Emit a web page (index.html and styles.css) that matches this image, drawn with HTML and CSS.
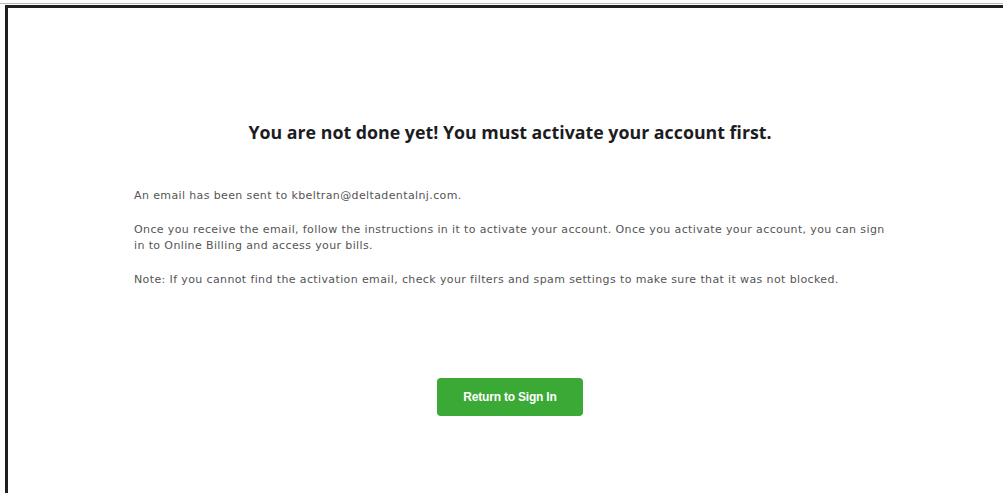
FILE: index.html
```html
<!DOCTYPE html>
<html lang="en">
<head>
<meta charset="utf-8">
<title>Activate your account</title>
<link rel="stylesheet" href="styles.css">
</head>
<body>
  <div class="frame">
    <main class="panel">
      <h1 class="title">You are not done yet! You must activate your account first.</h1>
      <div class="message">
        <p>An email has been sent to kbeltran@deltadentalnj.com.</p>
        <p>Once you receive the email, follow the instructions in it to activate your account. Once you activate your account, you can sign in to Online Billing and access your bills.</p>
        <p>Note: If you cannot find the activation email, check your filters and spam settings to make sure that it was not blocked.</p>
      </div>
      <div class="actions">
        <a class="btn" href="#">Return to Sign In</a>
      </div>
    </main>
  </div>
</body>
</html>
```

FILE: styles.css
```css
html, body {
  margin: 0;
  padding: 0;
  background: #fff;
  overflow: hidden;
}

body {
  width: 1003px;
  height: 493px;
  padding-top: 3px;
  box-sizing: border-box;
}

/* thin light rule above the dark frame */
body::before {
  content: "";
  display: block;
  height: 1px;
  background: #bdbdbd;
  margin-bottom: 1px;
}

.frame {
  margin-left: 5px;
  width: 1007px;
  height: 500px;
  box-sizing: border-box;
  border-top: 3px solid #231f20;
  border-left: 3px solid #231f20;
}

.panel {
  width: 752px;
  margin: 0 auto;
  padding-top: 113px;
}

.title {
  margin: 0;
  text-align: center;
  font-family: "Open Sans", "Liberation Sans", sans-serif;
  font-weight: 700;
  font-size: 17.8px;
  line-height: 22px;
  color: #1d1d1f;
}

.message {
  margin-top: 45px;
  font-family: "DejaVu Sans", "Liberation Sans", sans-serif;
  font-size: 11px;
  letter-spacing: 0.38px;
  line-height: 16px;
  color: #555;
}

.message p {
  margin: 0 0 18px;
}

.actions {
  display: flex;
  justify-content: center;
  margin-top: 90px;
}

.btn {
  display: flex;
  align-items: center;
  justify-content: center;
  width: 146px;
  height: 38px;
  border-radius: 4px;
  background: #3aa935;
  color: #fff;
  text-decoration: none;
  font-family: "Liberation Sans", sans-serif;
  font-weight: 700;
  font-size: 12px;
  letter-spacing: -0.2px;
}
```
